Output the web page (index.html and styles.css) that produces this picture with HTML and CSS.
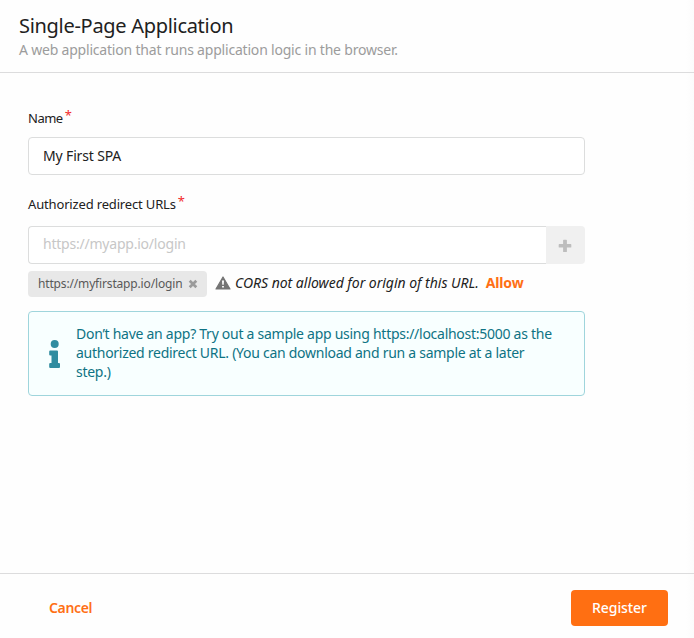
FILE: index.html
```
<!DOCTYPE html>
<html lang="en">
<head>
<meta charset="utf-8">
<title>Single-Page Application</title>
<link rel="stylesheet" href="styles.css">
</head>
<body>
<main class="wizard">
  <header class="wizard-header">
    <h1 class="title"><span>Single-Page Application</span></h1>
    <p class="subtitle"><span>A web application that runs application logic in the browser.</span></p>
  </header>
  <section class="wizard-body">
    <div class="label"><span class="label-name">Name</span><span class="required">*</span></div>
    <div class="field"><span class="value">My First SPA</span></div>
    <div class="label label-urls"><span class="label-text">Authorized redirect URLs</span><span class="required">*</span></div>
    <div class="field-group">
      <div class="field field-url"><span class="placeholder">https://myapp.io/login</span></div>
      <div class="add"><svg width="14" height="14" viewBox="0 0 14 14"><path d="M5.7 .7h2.6q.6 0 .6.6v3.800h3.800q.6 0 .6.6v2.2q0 .6-.6.6H8.900v3.900q0 .6-.6.6H5.700q-.6 0-.6-.6V8.500H1.300q-.6 0-.6-.6V5.700q0-.6.6-.6h3.800V1.300q0-.6.6-.6z"/></svg></div>
    </div>
    <div class="url-row">
      <div class="tag"><span class="tag-text">https://myfirstapp.io/login</span><svg class="close" width="10" height="10" viewBox="0 0 10 10"><path d="M1.700 1.700 8.300 8.300M8.300 1.700 1.700 8.300"/></svg></div>
      <svg class="warning" width="16" height="14" viewBox="0 0 16 14"><path class="triangle" d="M8 1 15 13H1z"/><path class="mark" d="M7 4.500h2l-.3 4.300H7.300zM7.100 9.900h1.800v1.700H7.100z"/></svg>
      <em class="cors">CORS not allowed for origin of this URL.</em>
      <a class="allow">Allow</a>
    </div>
    <div class="message">
      <svg class="info" width="12" height="30" viewBox="0 0 12 30"><circle cx="5.700" cy="5" r="4"/><path d="M1.500 11.500h6.500q1 0 1 1V24h1q1 0 1 1v3q0 1-1 1H1.200q-1 0-1-1v-3q0-1 1-1h1.300v-7.500H1.200q-1 0-1-1v-3q0-1 1-1z"/></svg>
      <p class="message-text"><span>Don’t have an app? Try out a sample app using https://localhost:5000 as the</span><br><span>authorized redirect URL. (You can download and run a sample at a later</span><br><span>step.)</span></p>
    </div>
  </section>
  <footer class="wizard-footer">
    <a class="cancel">Cancel</a>
    <div class="register"><span>Register</span></div>
  </footer>
</main>
</body>
</html>
```
FILE: styles.css
```
* { box-sizing: border-box; }
body { margin: 0; background: #fefefe; color: #212121; font: 14px/20px "Noto Sans", "Open Sans", sans-serif; }
h1, p { margin: 0; font-weight: 400; }
svg { flex: none; display: block; }
span, em, a { white-space: nowrap; }
.wizard { height: 638px; display: flex; flex-direction: column; background: linear-gradient(to right, #fefefe calc(100% - 8px), #fbfbfb); }
.wizard-header { height: 73px; padding: 12px 19px 0; border-bottom: 1px solid #dcdcdd; }
.title { font-size: 20px; line-height: 28px; letter-spacing: -0.3px; }
.subtitle { color: #9c9c9c; line-height: 20px; letter-spacing: -0.2px; }
.wizard-body { width: 557px; margin-left: 28px; flex: 1; }
.label { display: flex; height: 20px; margin-top: 35px; font-size: 13px; }
.label-urls { margin-top: 19px; }
.label-name { letter-spacing: -0.5px; }
.label-text { letter-spacing: -0.16px; }
.required { color: #f22c2c; margin: -3px 0 0 2px; }
.field { height: 38px; margin-top: 9px; padding: 0 14px; border: 1px solid #dcdddd; border-radius: 4px; background: #fff; display: flex; align-items: center; }
.value { letter-spacing: -0.15px; }
.field-group { display: flex; margin-top: 12px; }
.field-url { flex: 1; margin: 0; border-right: 0; border-radius: 4px 0 0 4px; padding-bottom: 2px; }
.placeholder { color: #c7c7c7; letter-spacing: -0.22px; }
.add { width: 39px; height: 38px; background: #f0f0f0; border-radius: 0 4px 4px 0; display: flex; align-items: center; justify-content: center; fill: #bdbdbd; padding: 2px 1px 0 0; }
.url-row { display: flex; align-items: center; height: 26px; margin-top: 7px; }
.tag { width: 179px; height: 26px; padding: 0 9px 0 10px; display: flex; align-items: center; justify-content: space-between; border-radius: 4px; background: #e8e8e8; color: #595959; font-size: 12px; letter-spacing: -0.16px; }
.close { stroke: #9b9b9b; stroke-width: 2.700; }
.warning { margin: 0 4px 2px 8px; }
.triangle { fill: #747474; stroke: #747474; stroke-width: 1.200; stroke-linejoin: round; }
.mark { fill: #fefefe; }
.cors { letter-spacing: -0.02px; margin-bottom: 2px; }
.allow { color: #ff6f15; font-weight: 700; margin: 0 0 2px 7px; letter-spacing: -0.15px; }
.message { height: 85px; margin-top: 14px; padding: 12px 20px 0; display: flex; border: 1px solid #9fd5dc; border-radius: 4px; background: #f8ffff; color: #0e7384; }
.info { fill: #308ca0; margin-top: 15px; }
.message-text { margin-left: 15px; line-height: 19px; letter-spacing: -0.27px; }
.wizard-footer { height: 65px; border-top: 1px solid #dcdcdd; padding: 16px 26px 0 49px; display: flex; align-items: flex-start; justify-content: space-between; }
.cancel { color: #ff6f15; font-weight: 600; line-height: 36px; letter-spacing: -0.35px; }
.register { width: 97px; height: 36px; border-radius: 4px; background: #ff6f12; color: #fff; font-weight: 500; line-height: 36px; text-align: center; letter-spacing: -0.08px; }
```
